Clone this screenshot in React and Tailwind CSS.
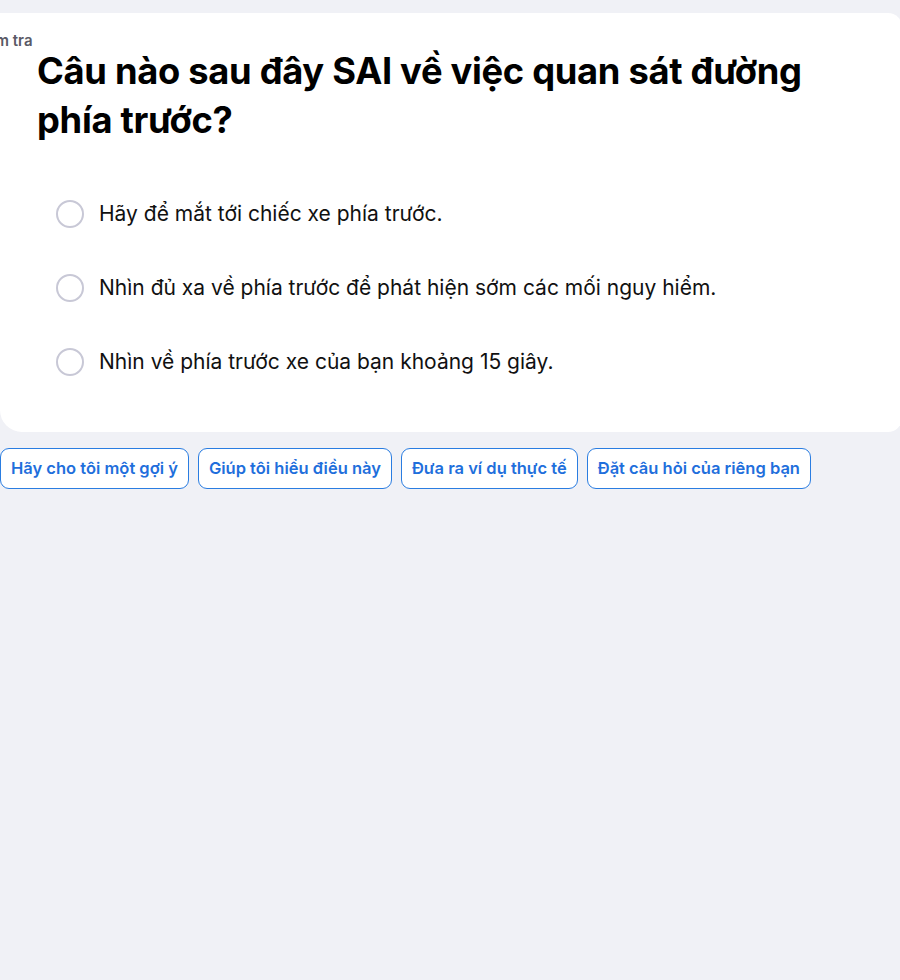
import React from "react";

const OPTIONS = [
  "Hãy để mắt tới chiếc xe phía trước.",
  "Nhìn đủ xa về phía trước để phát hiện sớm các mối nguy hiểm.",
  "Nhìn về phía trước xe của bạn khoảng 15 giây.",
];

const PROMPTS = [
  "Hãy cho tôi một gợi ý",
  "Giúp tôi hiểu điều này",
  "Đưa ra ví dụ thực tế",
  "Đặt câu hỏi của riêng bạn",
];

export default function App() {
  return (
    <div
      className="w-[900px] h-[980px] overflow-hidden bg-[#f0f1f6] pt-[13px]"
      style={{ fontFamily: "Inter, 'Noto Sans', sans-serif" }}
    >
      {/* question card */}
      <div className="w-[902px] h-[419px] bg-white rounded-tr-[14px] rounded-br-[14px] rounded-bl-[22px] pt-[20px]">
        <div className="-ml-[28px] text-[15px] font-semibold text-[#5a5a66] leading-[16px]">
          Kiểm tra
        </div>
        <h1 className="ml-[37px] mt-[-2px] text-[36.3px] font-bold leading-[49px] text-black tracking-[-0.3px] w-[790px]">
          Câu nào sau đây SAI về việc quan sát đường phía trước?
        </h1>

        <div className="ml-[56px] mt-[54px] flex flex-col gap-[45px]">
          {OPTIONS.map((o) => (
            <div key={o} className="flex items-center gap-[15px] h-[29px]">
              <span className="w-[28px] h-[28px] rounded-full border-2 border-[#c8c8d6] bg-white shrink-0" />
              <span className="text-[21px] text-[#111] leading-[28px]">{o}</span>
            </div>
          ))}
        </div>
      </div>

      {/* suggestion chips */}
      <div className="flex gap-[9px] mt-[16px]">
        {PROMPTS.map((p) => (
          <button
            key={p}
            className="h-[41px] px-[10px] rounded-[9px] border border-[#2a7de1] bg-white text-[#1f6fdc] text-[16.5px] font-semibold whitespace-nowrap"
          >
            {p}
          </button>
        ))}
      </div>
    </div>
  );
}
